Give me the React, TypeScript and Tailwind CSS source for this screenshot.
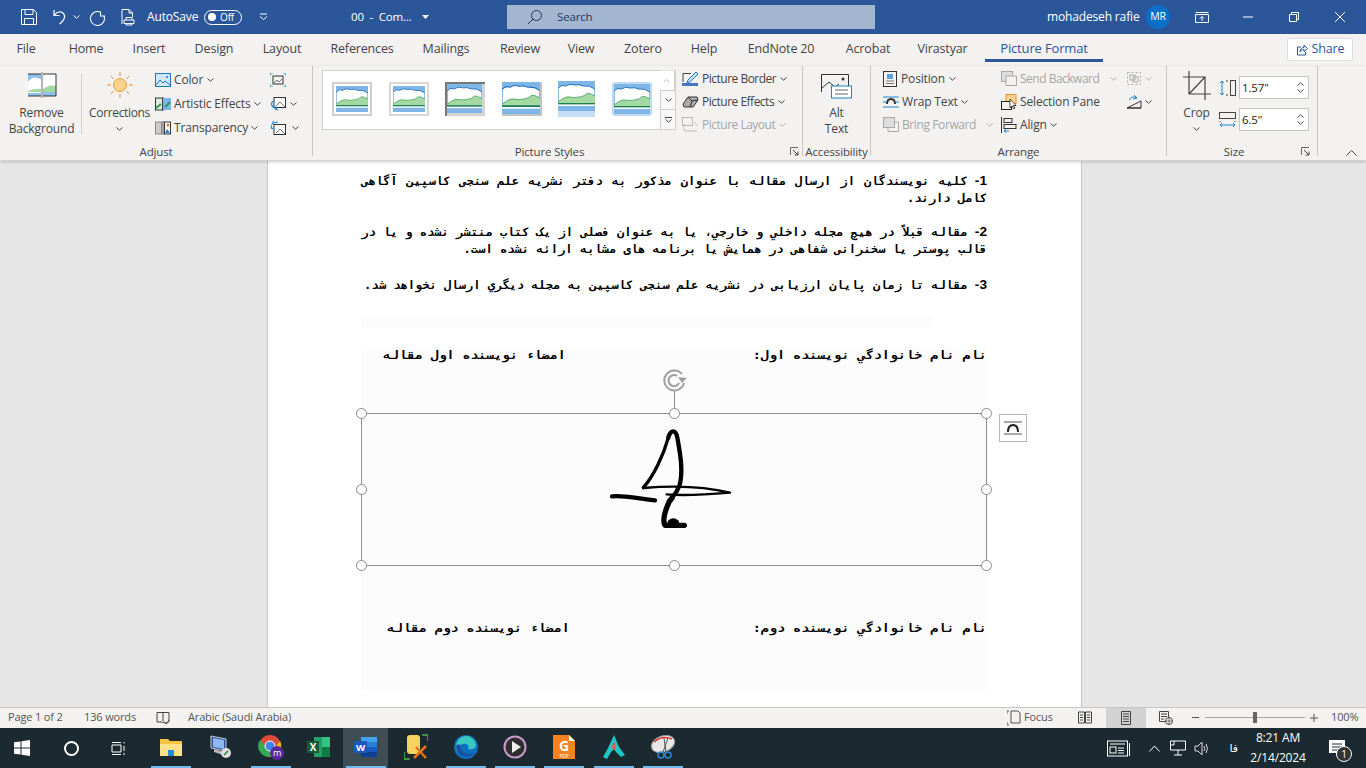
import React from "react";

const I = ({ w = 16, h = 16, vb, children, className = "" }: { w?: number; h?: number; vb?: string; children: React.ReactNode; className?: string }) => (
  <svg width={w} height={h} viewBox={vb ?? `0 0 ${w} ${h}`} fill="none" className={"shrink-0 " + className}>{children}</svg>
);
const Chev = ({ c = "#444", className = "" }: { c?: string; className?: string }) => (
  <I w={7} h={4} className={className}><path d="M.5.5 3.5 3.2 6.5.5" stroke={c} /></I>
);

const SmallBtn = ({ icon, label, disabled }: { icon: React.ReactNode; label: string; disabled?: boolean }) => (
  <div className={`h-[23px] flex items-center gap-[3px] ${disabled ? "text-[#a6a6a6]" : "text-[#444]"}`}>
    {icon}
    <span className="tracking-[-0.5px]">{label}</span>
    <Chev c={disabled ? "#b0b0b0" : "#444"} className="ml-[1px]" />
  </div>
);

const Thumb = ({ v }: { v: number }) => {
  const sky = "#7fb6e8";
  return (
    <div className={
      v === 0 ? "w-[40px] h-[34px] bg-white border-2 border-[#cfcfcf] p-[2px]" :
      v === 1 ? "w-[40px] h-[34px] bg-white border-2 border-[#d8d8d8] p-[2px]" :
      v === 2 ? "w-[40px] h-[34px] bg-[#d4d4d4] border-l-2 border-t-2 border-[#777] pr-[3px] pb-[3px]" :
      v === 3 ? "w-[40px] h-[34px] border-r-2 border-b-2 border-[#c4c4c4]" :
      v === 4 ? "w-[37px] h-[36px]" :
      "w-[40px] h-[34px] rounded-[3px] bg-[#bedbf3] p-[2px]"
    }>
      <svg width="100%" height="100%" viewBox="0 0 38 30" preserveAspectRatio="none" className={v === 4 ? "h-[30px]" : ""}>
        <rect width="38" height="30" fill={sky} />
        <path d="M0 7q4-4 8-2 4-3 9-1 5-1 9 1 6-1 12 3v14H0z" fill="#fff" stroke="#1f70b8" strokeWidth="1" />
        <path d="M0 21q8-6 12-5t10 0 7-3 9 2v7H0z" fill="#a4d9a2" />
        <path d="M0 21q8-6 12-5t10 0 7-3 9 2" stroke="#3c9a58" strokeWidth=".8" fill="none" />
        <rect y="22" width="38" height="1.5" fill="#1d7f4d" />
        <rect y="23.5" width="38" height="1.5" fill="#fff" />
      </svg>
      {v === 4 && <div className="h-[6px] bg-[#c4dff5]" />}
    </div>
  );
};

const tabs: [string, string][] = [
  ["File", "w-[52px]"], ["Home", "w-[68px]"], ["Insert", "w-[58px]"], ["Design", "w-[72px]"], ["Layout", "w-[64px]"],
  ["References", "w-[96px]"], ["Mailings", "w-[72px]"], ["Review", "w-[76px]"], ["View", "w-[46px]"], ["Zotero", "w-[78px]"],
  ["Help", "w-[44px]"], ["EndNote 20", "w-[110px]"], ["Acrobat", "w-[64px]"], ["Virastyar", "w-[85px]"],
];

const Launcher = () => (
  <I w={9} h={9}><path d="M.5 8V.5H8" stroke="#666" /><path d="M3 3l5 5M8 4.5V8H4.5" stroke="#444" /></I>
);

const GroupLabel = ({ children }: { children: React.ReactNode }) => (
  <div className="h-[9px] flex items-center justify-center text-[11.5px] text-[#444]">{children}</div>
);

const persian = {
  p1: "کلیه نویسندگان از ارسال مقاله با عنوان مذکور به دفتر نشریه علم سنجی کاسپین آگاهی کامل دارند.",
  p2: "مقاله قبلاً در هیچ مجله داخلي و خارجي، یا به عنوان فصلی از یک کتاب منتشر نشده و یا در قالب پوستر یا سخنرانی شفاهی در همایش یا برنامه های مشابه ارائه نشده است.",
  p3: "مقاله تا زمان پایان ارزیابی در نشریه علم سنجی کاسپین به مجله دیگري ارسال نخواهد شد.",
};

const docText = "text-[11.5px] leading-[17px] font-bold text-black [font-family:'DejaVu_Sans_Mono','Noto_Sans',monospace]";
const paraText = docText + " w-[596px] ml-auto origin-right scale-x-[1.05] tracking-[1px] [text-align:justify]";
const rowText = docText + " tracking-[1.95px] flex justify-between";
const Num = ({ n }: { n: string }) => (
  <span className="inline-block ml-[7px] text-[13px] leading-none tracking-normal [font-family:'Liberation_Sans',sans-serif]">{n}-</span>
);

const Handle = ({ className }: { className: string }) => (
  <div className={"absolute w-[11px] h-[11px] rounded-full bg-white border border-[#8a8a8a] " + className} />
);

const Underline = ({ on = true, children, w = "w-[49px]", active }: { on?: boolean; children: React.ReactNode; w?: string; active?: boolean }) => (
  <div className={`${w} h-full flex flex-col items-center ${active ? "bg-[#3f4e54]" : ""}`}>
    <div className="flex-1 flex items-center justify-center">{children}</div>
    <div className={`h-[2px] w-[40px] ${on ? "bg-[#76b9ed]" : ""}`} />
  </div>
);

export default function App() {
  return (
    <div className="w-[1366px] h-[768px] overflow-hidden flex flex-col bg-[#e6e6e6] text-[12px] [font-family:'Open_Sans','Noto_Sans',sans-serif] tracking-[-0.15px]">
      {/* Title bar */}
      <div className="h-[34px] shrink-0 bg-[#2b579a] text-white flex items-center">
        <div className="w-[20px]" />
        <I w={18} h={18}><path d="M1.5 1.5h12l3 3v12h-15zM5 1.5v5h8v-5M4.5 16.5v-6h9v6" stroke="#fff" /></I>
        <div className="w-[12px]" />
        <I w={18} h={18}><path d="M4 2v5.5h5.5M4.3 7C7 3.5 11 3 13.5 5.5c2.500 3 .8 7-4 10.500" stroke="#fff" strokeWidth="1.2" /></I>
        <div className="w-[5px]" />
        <Chev c="#fff" />
        <div className="w-[9px]" />
        <I w={17} h={18}><path d="M11.5 2.5v4.5H16M11.5 3.2A7 7 0 1 0 15 7" stroke="#fff" strokeWidth="1.1" transform="translate(0 1)" /></I>
        <div className="w-[14px]" />
        <I w={16} h={18}><path d="M2 16V1.5h7l3.5 3.5v4M9 1.5V5h3.5M4 12h10v3.5H4zM6 12V9.500h6V12M6 15.500v1.500h6v-1.500" stroke="#fff" /></I>
        <div className="w-[11px]" />
        <span className="text-[12px] w-[57px]">AutoSave</span>
        <div className="w-[38px] h-[15px] rounded-full border border-white flex items-center pl-[3px] gap-[4px]">
          <div className="w-[8px] h-[8px] rounded-full bg-white" />
          <span className="text-[10px]">Off</span>
        </div>
        <div className="w-[17px]" />
        <I w={9} h={8}><path d="M1 1h7M1 3.500l3.500 3 3.500-3" stroke="#fff" /></I>
        <div className="w-[83px]" />
        <span className="w-[71px] text-[11.5px] whitespace-pre">00  -  Com...</span>
        <I w={7} h={4}><path d="M0 0h7L3.500 4z" fill="#fff" /></I>
        <div className="w-[78px]" />
        <div className="w-[368px] h-[24px] bg-[#a3b6cf] flex items-center text-[#1f3864]">
          <div className="w-[20px]" />
          <I w={16} h={16}><circle cx="9.500" cy="6.500" r="5" stroke="#1f3864" /><path d="M6 10l-5 5" stroke="#1f3864" /></I>
          <span className="ml-[14px] text-[11.5px]">Search</span>
        </div>
        <div className="w-[172px]" />
        <span className="w-[99px] text-[12px]">mohadeseh rafie</span>
        <div className="w-[24px] h-[24px] rounded-full bg-[#0a6fc7] flex items-center justify-center text-[10.5px]">MR</div>
        <div className="w-[25px]" />
        <I w={14} h={11}><path d="M.5 2.500h13v8H.5zM.5.500h13M7 9V4.500M5 6.500l2-2 2 2" stroke="#fff" /></I>
        <div className="w-[34px]" />
        <I w={10} h={10}><path d="M0 5h10" stroke="#fff" /></I>
        <div className="w-[36px]" />
        <I w={10} h={10}><path d="M.5 2.500h7v7h-7zM2.500 2.500v-2h7v7h-2" stroke="#fff" /></I>
        <div className="w-[36px]" />
        <I w={10} h={10}><path d="M0 0l10 10M10 0 0 10" stroke="#fff" /></I>
      </div>

      {/* Tabs */}
      <div className="h-[32px] shrink-0 bg-[#f3f2f1] flex items-start text-[12.5px] text-[#444]">
        {tabs.map(([t, w]) => (
          <div key={t} className={`${w} h-[30px] flex items-center justify-center`}>{t}</div>
        ))}
        <div className="w-[118px] h-[28px] flex items-center justify-center text-[13px] text-[#2b579a] font-medium border-b-[3px] border-[#2b579a] pt-[5px]">Picture Format</div>
        <div className="w-[184px]" />
        <div className="mt-[4px] w-[66px] h-[23px] bg-white border border-[#e1dfdd] rounded-[2px] flex items-center justify-center gap-[4px] text-[#2b579a] font-medium text-[12.5px]">
          <I w={12} h={12}><path d="M5 3H1.500v8h8V8M4 8c0-3 2-4.500 4-4.500V1l3.500 3.500L8 7.500V5.500C6 5.500 5 6.500 4 8z" stroke="#2b579a" /></I>
          Share
        </div>
      </div>

      {/* Ribbon */}
      <div className="h-[95px] shrink-0 bg-[#f3f2f1] flex border-b border-[#d6d4d2] shadow-[0_1px_3px_rgba(0,0,0,.2)] relative z-10 text-[#444]">
        {/* Adjust */}
        <div className="w-[313px] mb-[4px] border-r border-[#c8c6c4] flex flex-col">
          <div className="flex-1 flex">
            <div className="w-[81px] pl-[2px] flex flex-col items-center pt-[6px]">
              <I w={30} h={26}>
                <rect x="1" y="2" width="13" height="22" fill="#8cc0ea" /><path d="M1 10q4-6 9-4l4 1v14H1z" fill="#fff" /><path d="M1 19q6-3 13-2v3H1z" fill="#a4d9a2" />
                <rect x="16" y="2" width="13" height="22" fill="#fff" /><path d="M16 17q6-5 13-3v6H16z" fill="#a4d9a2" /><rect x="16" y="20" width="13" height="4" fill="#8cc0ea" />
                <path d="M1 2h13M1 24h13M16 2h13v22H16" stroke="#333" /><path d="M15 0v26" stroke="#777" />
              </I>
              <div className="text-center leading-[16px] mt-[7px]">Remove<br />Background</div>
            </div>
            <div className="h-[60px] mt-[8px] w-px bg-[#d2d0ce]" />
            <div className="ml-[2px] w-[71px] flex flex-col items-center pt-[5px]">
              <I w={28} h={28}>
                <circle cx="14" cy="14" r="6.500" fill="#fbd38d" stroke="#ed9b3a" />
                <path d="M14 1v4M14 23v4M1 14h4M23 14h4M5 5l2.500 3M23 5l-2.500 3M5 23l2.500-3M23 23l-2.500-3" stroke="#ed8b2b" />
              </I>
              <div className="mt-[6px] leading-[16px] tracking-[-0.35px]">Corrections</div>
              <Chev className="mt-[6px]" />
            </div>
            <div className="w-[115px] flex flex-col pt-[2px]">
              <div className="h-[24px] flex items-center gap-[3px]">
                <I w={16} h={14}><rect x=".5" y=".5" width="15" height="13" fill="#d2e7f8" stroke="#1c76bf" /><path d="M1 12l4-5 3 3 2-2 5 4" stroke="#1c76bf" /><circle cx="12" cy="4" r="1" fill="#1c76bf" /></I>
                <span>Color</span><Chev className="ml-[1px]" />
              </div>
              <div className="h-[24px] flex items-center gap-[3px]">
                <I w={16} h={14}><rect x=".5" y="1" width="7" height="12" fill="#d8ecd8" stroke="#333" /><rect x="9" y="1" width="7" height="12" fill="#79b9e8" /><path d="M8 0v14" stroke="#555" /><path d="M1 11l5-4M10 10l5-5" stroke="#2e9a55" strokeWidth="2" /></I>
                <span>Artistic Effects</span><Chev />
              </div>
              <div className="h-[24px] flex items-center gap-[3px]">
                <I w={16} h={14}><rect x=".5" y="1" width="6" height="12" fill="#ccc" stroke="#888" /><rect x="9.500" y="1" width="6" height="12" fill="#fff" stroke="#333" /><path d="M8 0v14" stroke="#555" /><path d="M10 12l2-4 3 4z" fill="#2a7fc5" /><circle cx="13" cy="4" r="1.500" fill="#e8792a" /></I>
                <span>Transparency</span><Chev />
              </div>
            </div>
            <div className="flex flex-col pt-[2px]">
              <div className="h-[24px] flex items-center">
                <I w={16} h={14}><rect x="3" y="3" width="10" height="8" stroke="#333" /><path d="M4 10l3-3 2 2 3-3" stroke="#777" /><path d="M0 3V0h3M13 0h3v3M0 11v3h3M13 14h3v-3" stroke="#1c8bd6" /></I>
              </div>
              <div className="h-[24px] flex items-center gap-[4px]">
                <I w={16} h={14}><rect x="4" y=".5" width="11.500" height="10" fill="#fff" stroke="#333" /><path d="M6 9l4-4 5 5" stroke="#777" /><path d="M3 4Q0 7 3 10l5 3M3 10l3 0M8 13l-3-1" stroke="#1c8bd6" strokeWidth="1.200" /></I>
                <Chev />
              </div>
              <div className="h-[24px] flex items-center gap-[6px]">
                <I w={16} h={14}><rect x="4" y="3.500" width="11.500" height="10" fill="#fff" stroke="#333" /><path d="M6 12l4-4 5 5" stroke="#777" /><path d="M8 1 3 2q-3 2-1 6M3 0l0 3M1 6l1 2 2-1" stroke="#1c8bd6" /></I>
                <Chev />
              </div>
            </div>
          </div>
          <GroupLabel>Adjust</GroupLabel>
        </div>

        {/* Picture Styles */}
        <div className="w-[490px] mb-[4px] border-r border-[#c8c6c4] flex flex-col">
          <div className="flex-1 flex pt-[4px]">
            <div className="ml-[9px] w-[354px] h-[60px] bg-white border border-[#d2d0ce] flex">
              <div className="flex-1 flex items-center pl-[9px] gap-[16.600px] pb-[2px]">
                {[0, 1, 2, 3, 4, 5].map((v) => <Thumb key={v} v={v} />)}
              </div>
              <div className="w-[15px] flex flex-col text-[#777]">
                <div className="flex-1 bg-white border-l border-[#d2d0ce] flex items-center justify-center rotate-180"><Chev c="#bbb" /></div>
                <div className="flex-1 bg-[#f8f8f8] border border-r-0 border-[#d2d0ce] flex items-center justify-center"><Chev /></div>
                <div className="flex-1 bg-[#f8f8f8] border-l border-[#d2d0ce] flex flex-col items-center justify-center gap-[1px]"><div className="w-[7px] h-px bg-[#444]" /><Chev /></div>
              </div>
            </div>
            <div className="ml-[6px] flex flex-col mt-[-3px]">
              <SmallBtn label="Picture Border" icon={<I w={17} h={15}><path d="M1 11V2.500h8" stroke="#444" /><path d="M6 9l8-8 2 2-8 8-3 1z" fill="#cce4f7" stroke="#1c76bf" /><rect y="12" width="16" height="3" fill="#4472c4" /></I>} />
              <SmallBtn label="Picture Effects" icon={<I w={17} h={15}><path d="M1 10 6 3h9l1 3-5 7H2z" fill="#aaa" stroke="#333" /><path d="M6 3l4 4 6-1M10 7 8 13" stroke="#333" /></I>} />
              <SmallBtn disabled label="Picture Layout" icon={<I w={17} h={15}><rect x=".5" y=".5" width="10" height="8" stroke="#bbb" /><path d="M3 7a5 5 0 0 0 0 7h7l5 0M12 5l4 4" stroke="#bbb" /></I>} />
            </div>
          </div>
          <div className="h-[9px] flex items-center">
            <div className="w-[407px] text-center text-[11.500px] pl-[66px]">Picture Styles</div>
            <div className="ml-[70px]"><Launcher /></div>
          </div>
        </div>

        {/* Accessibility */}
        <div className="w-[68px] mb-[4px] border-r border-[#c8c6c4] flex flex-col">
          <div className="flex-1 flex flex-col items-center pt-[8px]">
            <I w={31} h={28}>
              <path d="M.5 18V.5h27V12M1 14l7-6 6 5 4-3" stroke="#333" /><circle cx="22" cy="5" r="1.500" fill="#333" />
              <rect x="10.500" y="12" width="20" height="12" fill="#fff" stroke="#1c86d0" /><path d="M14 16h13M14 20h13" stroke="#666" />
            </I>
            <div className="text-center leading-[16px] mt-[3px]">Alt<br />Text</div>
          </div>
          <GroupLabel>Accessibility</GroupLabel>
        </div>

        {/* Arrange */}
        <div className="w-[296px] mb-[4px] border-r border-[#c8c6c4] flex flex-col">
          <div className="flex-1 flex pt-px">
            <div className="ml-[12px] w-[118px] flex flex-col">
              <div className="h-[23px] flex items-center gap-[4px]">
                <I w={14} h={16}><rect x=".5" y=".5" width="13" height="15" stroke="#333" /><rect x="4" y="3" width="6" height="5" fill="#5aa5de" /><path d="M3 10h8M3 12.500h8" stroke="#777" /></I>
                <span>Position</span><Chev />
              </div>
              <div className="h-[23px] flex items-center gap-[3px]">
                <I w={16} h={14}><path d="M0 2h16M0 12h16M0 7h3M13 7h3" stroke="#1c86d0" /><path d="M4 9q0-5 4-5t4 5" stroke="#333" strokeWidth="2" /></I>
                <span>Wrap Text</span><Chev />
              </div>
              <div className="h-[23px] flex items-center gap-[3px] text-[#a6a6a6]">
                <I w={16} h={15}><rect x=".5" y=".5" width="11" height="10" fill="#ddd" stroke="#aaa" /><path d="M12 5h3.500v9.500H5V11" stroke="#aaa" /></I>
                <span className="tracking-[-0.4px]">Bring Forward</span><Chev c="#b0b0b0" className="ml-[7px]" />
              </div>
            </div>
            <div className="w-[125px] flex flex-col">
              <div className="h-[23px] flex items-center gap-[3px] text-[#a6a6a6]">
                <I w={16} h={15}><rect x=".5" y=".5" width="11" height="10" fill="#ddd" stroke="#aaa" /><rect x="5" y="5" width="10.500" height="9.500" fill="#f3f2f1" stroke="#aaa" /></I>
                <span className="tracking-[-0.5px]">Send Backward</span><Chev c="#b0b0b0" className="ml-[8px]" />
              </div>
              <div className="h-[23px] flex items-center gap-[3px]">
                <I w={16} h={16}><rect x="5" y=".5" width="10" height="9" fill="#fbd38d" stroke="#ed8b2b" /><rect x=".5" y="7.500" width="10" height="8" fill="#f3f2f1" stroke="#222" /><path d="M9 5l0 9 2-2 2 3 1-1-2-2.500h3z" fill="#fff" stroke="#222" strokeWidth=".8" /></I>
                <span>Selection Pane</span>
              </div>
              <div className="h-[23px] flex items-center gap-[3px]">
                <I w={16} h={16}><path d="M.5 0v16" stroke="#333" /><rect x="3" y="1.500" width="8" height="4" stroke="#333" /><rect x="3" y="7.500" width="12" height="4" stroke="#333" /><path d="M8 14H3l2-1.500M3 14l2 1.500" stroke="#1c86d0" /></I>
                <span>Align</span><Chev />
              </div>
            </div>
            <div className="flex flex-col">
              <div className="h-[23px] flex items-center gap-[3px]">
                <I w={16} h={15}><rect x="1.500" y="1.500" width="13" height="12" stroke="#aaa" strokeDasharray="2 2" /><rect x="4" y="4" width="5" height="5" stroke="#aaa" /><rect x="7" y="6" width="5" height="5" stroke="#aaa" /></I>
                <Chev c="#b0b0b0" />
              </div>
              <div className="h-[23px] flex items-center gap-[3px]">
                <I w={16} h={15}><path d="M1 14 15 7v7zM1 14h14" stroke="#333" /><path d="M3 6q3-5 8-2M8 1l3 3-4 1" stroke="#1c86d0" /></I>
                <Chev />
              </div>
            </div>
          </div>
          <GroupLabel>Arrange</GroupLabel>
        </div>

        {/* Size */}
        <div className="w-[151px] mb-[4px] border-r border-[#c8c6c4] flex flex-col">
          <div className="flex-1 flex">
            <div className="ml-[11px] w-[37px] flex flex-col items-center pt-[5px]">
              <I w={28} h={29}><path d="M6 0v23h22M0 6h22v23M6 23 22 6" stroke="#444" strokeWidth="1.200" /></I>
              <div className="mt-[5px] leading-[16px]">Crop</div>
              <Chev className="mt-[6px]" />
            </div>
            <div className="ml-[4px] flex flex-col gap-[9px] pt-[10px] text-[#222]">
              <div className="flex items-center gap-[3px]">
                <I w={17} h={16}><path d="M3 1v14M1 3l2-2 2 2M1 13l2 2 2-2" stroke="#1c86d0" /><path d="M7 1h2M7 15h2" stroke="#444" /><rect x="11.500" y=".5" width="5" height="15" stroke="#444" /></I>
                <div className="w-[70px] h-[23px] bg-white border border-[#c8c6c4] flex items-center justify-between pl-[2px] pr-[4px]">
                  <span className="text-[11.500px]">1.57"</span>
                  <div className="flex flex-col gap-[3px]"><Chev className="rotate-180" /><Chev /></div>
                </div>
              </div>
              <div className="flex items-center gap-[3px]">
                <I w={17} h={16}><rect x=".5" y=".5" width="16" height="6" stroke="#444" /><path d="M1 9v1M16 9v1" stroke="#444" /><path d="M1 13h15M3 11l-2 2 2 2M14 11l2 2-2 2" stroke="#1c86d0" /></I>
                <div className="w-[70px] h-[23px] bg-white border border-[#c8c6c4] flex items-center justify-between pl-[2px] pr-[4px]">
                  <span className="text-[11.500px]">6.5"</span>
                  <div className="flex flex-col gap-[3px]"><Chev className="rotate-180" /><Chev /></div>
                </div>
              </div>
            </div>
          </div>
          <div className="h-[9px] flex items-center">
            <div className="w-[134px] text-center text-[11.500px]">Size</div>
            <Launcher />
          </div>
        </div>

        <div className="flex-1 flex items-end justify-end pr-[9px] pb-[4px]">
          <I w={11} h={6}><path d="M.5 5.500 5.500.5l5 5" stroke="#444" /></I>
        </div>
      </div>

      {/* Document */}
      <div className="flex-1 min-h-0 flex justify-center pr-[17px]">
        <div className="w-[815px] h-full bg-white border-x border-[#c6c6c6] pl-[93px] pr-[94px] pt-[12px]">
          <div dir="rtl" className={paraText}><Num n="1" />{persian.p1}</div>
          <div dir="rtl" className={paraText + " mt-[17px]"}><Num n="2" />{persian.p2}</div>
          <div dir="rtl" className={paraText + " mt-[19px]"}><Num n="3" />{persian.p3}</div>
          <div className="mt-[21px] h-[13px] w-[571px] bg-[#fcfcfc]" />
          <div className="mt-[18px] h-[344px] bg-[#fcfcfc] pt-px">
            <div dir="rtl" className={rowText + " pl-[22px]"}>
              <span className="origin-right scale-x-[1.166]">نام نام خانوادگي نویسنده اول:</span>
              <span className="origin-left scale-x-[1.147]">امضاء نویسنده اول مقاله</span>
            </div>
            <div className="relative mt-[49px] h-[153px] border border-[#8f8f8f]">
              <svg viewBox="0 0 510 525" width="170" height="175" fill="none" className="absolute left-[228px] top-[-48px]" strokeLinecap="round" strokeLinejoin="round">
                <path d="M160 365C190 330 220 270 235 215" stroke="#000" strokeWidth="10" />
                <path d="M235 215c7-25 22-25 27 0 10 55 18 105 6 145-6 15-14 26-22 36" stroke="#000" strokeWidth="13" />
                <path d="M246 396c-8 8-12 16-14 24-10 25-14 45-7 58h58" stroke="#000" strokeWidth="16" />
                <path d="M240 468q10-8 20 0" stroke="#000" strokeWidth="14" />
                <path d="M160 366c70-6 170-8 260 14-60 5-140 10-190 5" stroke="#000" strokeWidth="7" />
                <path d="M66 391C100 387 130 396 195 403" stroke="#000" strokeWidth="13" />
              </svg>
              {/* rotate handle */}
              <div className="absolute left-[312px] top-[-24px] h-[23px] w-px bg-[#8f8f8f]" />
              <svg width="26" height="24" viewBox="0 0 26 24" fill="none" className="absolute left-[300px] top-[-46px]">
                <path d="M22 15A10 10 0 1 1 20 6" stroke="#a0a0a0" strokeWidth="2" />
                <path d="M17 15a5.500 5.500 0 1 1-2-7" stroke="#a0a0a0" strokeWidth="2" />
                <path d="M25 10l-5 5-4-6z" fill="#a0a0a0" />
              </svg>
              <Handle className="left-[-6px] top-[-6px]" />
              <Handle className="left-[307px] top-[-6px]" />
              <Handle className="right-[-6px] top-[-6px]" />
              <Handle className="left-[-6px] top-[70px]" />
              <Handle className="right-[-6px] top-[70px]" />
              <Handle className="left-[-6px] bottom-[-6px]" />
              <Handle className="left-[307px] bottom-[-6px]" />
              <Handle className="right-[-6px] bottom-[-6px]" />
              <div className="absolute left-[637px] top-0 w-[28px] h-[28px] bg-white border border-[#b5b5b5] flex items-center justify-center">
                <I w={20} h={14}><path d="M1 1h18M1 13h18" stroke="#555" /><path d="M5 11q0-7 5-7t5 7" stroke="#222" strokeWidth="2" /></I>
              </div>
            </div>
            <div dir="rtl" className={rowText + " pl-[26px] mt-[54px]"}>
              <span className="origin-right scale-x-[1.166]">نام نام خانوادگي نویسنده دوم:</span>
              <span className="origin-left scale-x-[1.147]">امضاء نویسنده دوم مقاله</span>
            </div>
          </div>
        </div>
      </div>

      {/* Status bar */}
      <div className="h-[21px] shrink-0 bg-[#f3f2f1] border-t border-[#c6c6c6] pb-px flex items-center text-[11px] text-[#555]">
        <span className="ml-[8px] w-[76px]">Page 1 of 2</span>
        <span className="w-[72px]">136 words</span>
        <I w={14} h={14}><path d="M1 1.500h12v9l-2 2-3-1.500-1 .5-1-.5H1zM7 1.500V10M8 11l2 2 3-4" stroke="#444" /></I>
        <span className="ml-[18px]">Arabic (Saudi Arabia)</span>
        <div className="flex-1" />
        <I w={15} h={16}><path d="M4 3V1h7l2 2v10H4z" stroke="#555" /><path d="M2 1H0v3M0 12v3h2" stroke="#555" /></I>
        <span className="ml-[2px] w-[54px]">Focus</span>
        <I w={14} h={13}><path d="M.5 1h6v11h-6zM7.500 1h6v11h-6zM2 4h3M2 6.500h3M2 9h3M9 4h3M9 6.500h3M9 9h3" stroke="#444" /></I>
        <div className="ml-[14px] w-[40px] h-[20px] bg-[#d2d2d2] flex items-center justify-center">
          <I w={10} h={14}><path d="M.5.5h9v13h-9zM2 3h6M2 5.500h6M2 8h6M2 10.500h6" stroke="#444" /></I>
        </div>
        <div className="ml-[13px]"><I w={14} h={14}><path d="M.5.5h9v10H.5zM2 3h6M2 5.500h6M2 8h3" stroke="#444" /><circle cx="10" cy="10" r="3.500" fill="#f3f2f1" stroke="#444" /><path d="M6.500 10h7M10 6.500v7" stroke="#444" strokeWidth=".7" /></I></div>
        <div className="ml-[19px] w-[7px] h-px bg-[#555]" />
        <div className="ml-[6px] w-[100px] h-px bg-[#a6a6a6] relative flex items-center justify-center">
          <div className="w-[4px] h-[11px] bg-[#666]" />
        </div>
        <div className="ml-[5px]"><I w={8} h={8}><path d="M0 4h8M4 0v8" stroke="#555" /></I></div>
        <span className="ml-[13px] mr-[8px] w-[27px] text-right">100%</span>
      </div>

      {/* Taskbar */}
      <div className="h-[40px] shrink-0 bg-[#1a2a30] flex items-center text-white">
        <div className="w-[44px] flex justify-center">
          <I w={16} h={16}><path d="M0 2.300 6.500 1.400V7.500H0zM7.500 1.300 16 0v7.500H7.500zM0 8.500h6.500v6.100L0 13.700zM7.500 8.500H16V16l-8.500-1.300z" fill="#fff" /></I>
        </div>
        <div className="w-[54px] flex justify-center">
          <div className="w-[15px] h-[15px] rounded-full border-2 border-white" />
        </div>
        <div className="w-[42px] flex justify-center">
          <I w={16} h={15}><path d="M1 4h9v7H1zM1 1.500h9M1 13.500h9M13 1v1.500M13 5v5M13 12v2" stroke="#fff" /></I>
        </div>
        <div className="w-[6px]" />
        <div className="h-full flex">
          <Underline w="w-[50px]">
            <I w={22} h={20}><path d="M0 2h8l2 2h12v15H0z" fill="#f6c343" /><path d="M0 7h22v12H0z" fill="#fce38a" /><path d="M8 13h6v6H8z" fill="#2b88d8" /></I>
          </Underline>
          <Underline w="w-[50px]" on={false}>
            <I w={24} h={24}><path d="M2 1l15 3v12L2 13z" fill="#2a4fa8" stroke="#ccc" /><path d="M4 3l11 2v9L4 12z" fill="#8fb8ef" /><path d="M5 14l9 3v3l-9-3z" fill="#bbb" /><circle cx="17" cy="18" r="5" fill="#ddd" /><path d="M15 20l4-4" stroke="#2e7d32" strokeWidth="1.500" /></I>
          </Underline>
          <Underline w="w-[49px]">
            <I w={26} h={26}><circle cx="12" cy="12" r="11" fill="#dd4b39" /><path d="M22 7a11 11 0 0 1-10 16l5-9z" fill="#fbbc05" /><path d="M2 6a11 11 0 0 0 10 17l5-9-5 3z" fill="#34a853" /><circle cx="12" cy="12" r="5" fill="#4285f4" stroke="#fff" /><circle cx="19" cy="19" r="7" fill="#5a2a9d" /><text x="19" y="22" fontSize="9" fill="#fff" textAnchor="middle">m</text></I>
          </Underline>
          <Underline w="w-[48px]" on={false}>
            <I w={24} h={22}><rect x="7" y="1" width="16" height="20" fill="#21a366" /><rect x="15" y="1" width="8" height="10" fill="#33c481" /><rect x="15" y="11" width="8" height="10" fill="#107c41" /><rect y="5" width="12" height="12" fill="#185c37" /><text x="6" y="15" fontSize="10" fontWeight="bold" fill="#fff" textAnchor="middle">X</text></I>
          </Underline>
          <Underline w="w-[45px]" active>
            <I w={24} h={22}><rect x="7" y="1" width="16" height="5" fill="#41a5ee" /><rect x="7" y="6" width="16" height="5" fill="#2b7cd3" /><rect x="7" y="11" width="16" height="5" fill="#185abd" /><rect x="7" y="16" width="16" height="5" fill="#103f91" /><rect y="5" width="13" height="12" fill="#185abd" /><text x="6.500" y="15" fontSize="9.500" fontWeight="bold" fill="#fff" textAnchor="middle">W</text></I>
          </Underline>
          <div className="w-[3px]" />
          <Underline w="w-[50px]" on={false}>
            <I w={24} h={26}><rect x="3" y="1" width="13" height="19" rx="3" fill="#f4d35e" /><path d="M0 18v7h6M24 1v6M18 1h6" stroke="#4caf50" strokeWidth="1.500" /><path d="M10 24 22 12M12 13l10 11" stroke="#e8711a" strokeWidth="2.500" /></I>
          </Underline>
          <Underline w="w-[49px]">
            <I w={24} h={24}><circle cx="12" cy="12" r="12" fill="#0c6fbf" /><path d="M2 12a10 10 0 0 1 20-2c0 4-5 5-8 4 2-3-1-6-5-5s-7 5-3 10C3 18 2 15 2 12z" fill="#38c8c0" /><path d="M7 12c0 6 7 9 14 5-4 7-18 6-19-5 1-3 3-4 5 0z" fill="#1b4fa0" /></I>
          </Underline>
          <Underline w="w-[49px]">
            <I w={24} h={24}><circle cx="12" cy="12" r="10.500" fill="#2f2f2f" stroke="#c89ac8" strokeWidth="2" /><path d="M9 6l9 6-9 6z" fill="#eee" /></I>
          </Underline>
          <Underline w="w-[50px]">
            <I w={24} h={26}><path d="M1 1h16l6 6v18H1z" fill="#f38220" /><path d="M17 1v6h6" fill="#fff" /><text x="12" y="17" fontSize="14" fontWeight="bold" fill="#fff" textAnchor="middle">G</text><text x="12" y="24" fontSize="5" fill="#fff" textAnchor="middle">PDF</text></I>
          </Underline>
          <Underline w="w-[49px]">
            <I w={24} h={26}><path d="M12 1c2 4 3 8 5 12l6 8-4 2-5-5-2-3-3 3-4 7-4-2 5-9z" fill="#1cc8c8" /><path d="M11 9l2 0 1 5-2 2-2-2z" fill="#f54" /></I>
          </Underline>
          <Underline w="w-[49px]">
            <I w={26} h={26}><ellipse cx="13" cy="10" rx="12" ry="8" transform="rotate(-20 13 10)" fill="#e8e8e8" stroke="#999" /><path d="M4 8Q12 1 22 5" stroke="#d33" strokeWidth="1.500" /><path d="M14 4l2 14M18 4l-5 14" stroke="#555" /><circle cx="11" cy="21" r="3" stroke="#2b88d8" strokeWidth="1.500" /><circle cx="18" cy="21" r="3" stroke="#2b88d8" strokeWidth="1.500" /></I>
          </Underline>
        </div>
        <div className="flex-1" />
        <I w={23} h={17}><rect x=".5" y="1" width="20" height="15" stroke="#fff" /><rect x="3" y="7" width="6" height="6" stroke="#fff" /><path d="M3 4h15M11 8h6M11 10.500h6M11 13h6M22.500 3v13" stroke="#fff" /></I>
        <div className="ml-[19px]"><I w={11} h={7}><path d="M.5 6.500l5-5.500 5 5.500" stroke="#fff" /></I></div>
        <div className="ml-[10px]"><I w={16} h={16}><path d="M.5 1h15v9H.5zM4 1v4H1M8 10v5M4 15h8" stroke="#fff" /></I></div>
        <div className="ml-[8px]"><I w={16} h={15}><path d="M1 5h3l4-4v13l-4-4H1zM10 5q1.500 2.500 0 5M12 3q3 4.500 0 9" stroke="#ddd" /></I></div>
        <span dir="rtl" className="ml-[14px] w-[14px] text-[11px] [font-family:'Noto_Sans','DejaVu_Sans',sans-serif]">فا</span>
        <div className="ml-[11px] w-[58px] text-center text-[12px] leading-[20px] text-white">8:21 AM<br />2/14/2024</div>
        <div className="ml-[22px] mr-[21px] relative w-[16px] h-[22px]">
          <I w={16} h={16} className="mt-[3px]"><path d="M0 0h16v13H9l-2 3v-3H0z" fill="#fff" /><path d="M3 4h10M3 7h10M3 10h10" stroke="#1a2a30" /></I>
          <div className="absolute left-[7px] top-[9px] w-[16px] h-[16px] rounded-full bg-[#333] border border-white flex items-center justify-center text-[10px]">1</div>
        </div>
      </div>
    </div>
  );
}
